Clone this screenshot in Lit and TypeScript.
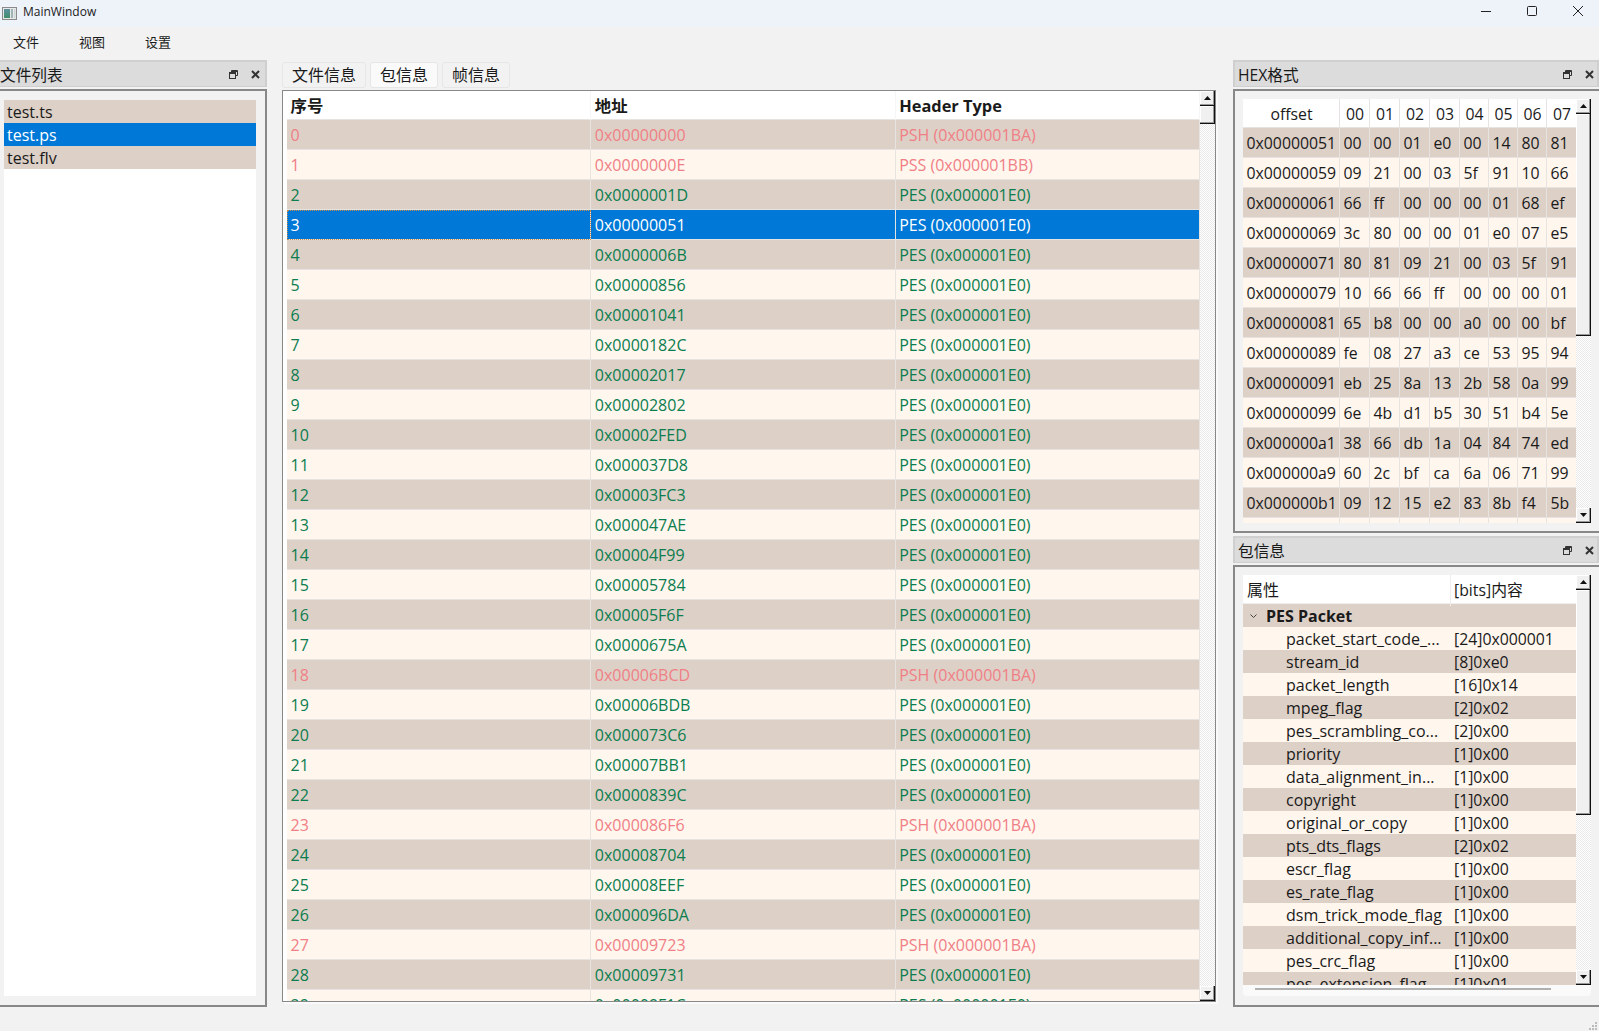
import { LitElement, css, html, svg } from 'lit';
import { customElement } from 'lit/decorators.js';

const PSH = 'PSH (0x000001BA)';
const PSS = 'PSS (0x000001BB)';
const PES = 'PES (0x000001E0)';

const PACKETS: [string, string][] = [
  ['00000000', PSH], ['0000000E', PSS], ['0000001D', PES], ['00000051', PES], ['0000006B', PES],
  ['00000856', PES], ['00001041', PES], ['0000182C', PES], ['00002017', PES], ['00002802', PES],
  ['00002FED', PES], ['000037D8', PES], ['00003FC3', PES], ['000047AE', PES], ['00004F99', PES],
  ['00005784', PES], ['00005F6F', PES], ['0000675A', PES], ['00006BCD', PSH], ['00006BDB', PES],
  ['000073C6', PES], ['00007BB1', PES], ['0000839C', PES], ['000086F6', PSH], ['00008704', PES],
  ['00008EEF', PES], ['000096DA', PES], ['00009723', PSH], ['00009731', PES], ['00009F1C', PES],
];

const HEX_ROWS: [string, string][] = [
  ['00000051', '00 00 01 e0 00 14 80 81'],
  ['00000059', '09 21 00 03 5f 91 10 66'],
  ['00000061', '66 ff 00 00 00 01 68 ef'],
  ['00000069', '3c 80 00 00 01 e0 07 e5'],
  ['00000071', '80 81 09 21 00 03 5f 91'],
  ['00000079', '10 66 66 ff 00 00 00 01'],
  ['00000081', '65 b8 00 00 a0 00 00 bf'],
  ['00000089', 'fe 08 27 a3 ce 53 95 94'],
  ['00000091', 'eb 25 8a 13 2b 58 0a 99'],
  ['00000099', '6e 4b d1 b5 30 51 b4 5e'],
  ['000000a1', '38 66 db 1a 04 84 74 ed'],
  ['000000a9', '60 2c bf ca 6a 06 71 99'],
  ['000000b1', '09 12 15 e2 83 8b f4 5b'],
];

const FIELDS: [string, string][] = [
  ['packet_start_code_...', '[24]0x000001'],
  ['stream_id', '[8]0xe0'],
  ['packet_length', '[16]0x14'],
  ['mpeg_flag', '[2]0x02'],
  ['pes_scrambling_co...', '[2]0x00'],
  ['priority', '[1]0x00'],
  ['data_alignment_in...', '[1]0x00'],
  ['copyright', '[1]0x00'],
  ['original_or_copy', '[1]0x00'],
  ['pts_dts_flags', '[2]0x02'],
  ['escr_flag', '[1]0x00'],
  ['es_rate_flag', '[1]0x00'],
  ['dsm_trick_mode_flag', '[1]0x00'],
  ['additional_copy_inf...', '[1]0x00'],
  ['pes_crc_flag', '[1]0x00'],
  ['pes_extension_flag', '[1]0x01'],
];

const floatIcon = svg`<svg width="9" height="9" viewBox="0 0 9 9" fill="none" stroke="#333" stroke-width="1">
  <path d="M2.5 2.5V.5h6v5h-2"/><rect x=".5" y="2.5" width="6" height="6" fill="#dcdcdc"/><path d="M.5 3.5h6M2.5 1.5h6" />
</svg>`;

const closeIcon = svg`<svg width="9" height="9" viewBox="0 0 9 9" stroke="#333" stroke-width="2">
  <path d="M1 1l7 7M8 1L1 8"/>
</svg>`;

@customElement('app-root')
export class AppRoot extends LitElement {
  static styles = css`
    :host {
      display: flex;
      flex-direction: column;
      height: 100vh;
      overflow: hidden;
      background: #f2f2f2;
      color: #1a1a1a;
      font-family: 'Open Sans', 'Noto Sans CJK SC', sans-serif;
      font-size: 16px;
    }

    .titlebar {
      display: flex;
      align-items: center;
      height: 27px;
      flex: none;
      background: #eef3fa;
      font-size: 12px;
      padding-left: 2px;
    }

    .titlebar .name {
      margin-left: 6px;
      flex: 1;
      position: relative;
      top: -2px;
    }

    .win {
      display: flex;
      gap: 30px;
      padding: 0 13px 5px 0;
    }

    .menubar {
      display: flex;
      gap: 40px;
      height: 33px;
      flex: none;
      align-items: center;
      padding: 0 0 5px 13px;
      box-sizing: border-box;
      font-size: 13px;
    }

    .main {
      display: flex;
      height: 947px;
      flex: none;
    }

    .dock-title {
      display: flex;
      align-items: center;
      height: 27px;
      box-sizing: border-box;
      background: #dcdcdc;
      border: 2px solid #cfcfcf;
      border-left: none;
      border-bottom-width: 1px;
      margin-bottom: 2px;
      gap: 13px;
      padding-right: 5px;
      flex: none;
      font-size: 15.7px;
    }

    .dock-title span {
      flex: 1;
    }

    .dock-title svg {
      display: block;
    }

    .dock-body {
      box-sizing: border-box;
      border: 2px solid #888;
      background: #f2f2f2;
      display: flex;
    }

    .left {
      width: 267px;
      flex: none;
      display: flex;
      flex-direction: column;
    }

    .left .dock-body {
      flex: 1;
      border-left: none;
      padding: 9px 9px 9px 4px;
    }

    .file-list {
      flex: 1;
      background: #fff;
    }

    .file-list div {
      height: 23px;
      line-height: 25px;
      padding-left: 3px;
      background: #ddd0c7;
    }

    .file-list .selected {
      background: #0078d7;
      color: #fff;
    }

    .center {
      width: 934px;
      flex: none;
      margin-left: 15px;
      display: flex;
      flex-direction: column;
    }

    .tabs {
      display: flex;
      gap: 4px;
      height: 26px;
      margin-top: 2px;
      margin-bottom: 2px;
      flex: none;
    }

    .tab {
      box-sizing: border-box;
      height: 26px;
      line-height: 25px;
      padding: 0 9px;
      border: 1px solid #e6e6e6;
      border-radius: 3px;
      background: #f2f2f2;
    }

    .tab.current {
      background: #fafafa;
    }

    .frame {
      height: 912px;
      box-sizing: border-box;
      border: 1px solid #888;
      background: #fff;
      display: flex;
      padding-left: 4px;
      box-shadow: 2px 2px 0 #fafafa;
    }

    .packets {
      flex: 1;
      min-width: 0;
      overflow: hidden;
    }

    .packet-row {
      display: grid;
      grid-template-columns: repeat(3, 1fr);
      height: 30px;
      box-sizing: border-box;
      border-bottom: 1px solid #e6e3e0;
      line-height: 30px;
    }

    .packet-row > div {
      padding-left: 3.5px;
      border-right: 1px solid #e6e3e0;
    }

    .packet-row.head {
      height: 29px;
      font-weight: 700;
      font-size: 16.4px;
      line-height: 29px;
    }

    .packet-row.head > div {
      border-right-color: #f6f6f6;
    }

    .dark {
      background: #ddd0c7;
    }

    .light {
      background: #fff6ee;
    }

    .pes {
      color: #0b7d4e;
    }

    .psx {
      color: #f07f85;
    }

    .packet-row.selected {
      background: #0078d7;
      color: #fff;
    }

    .packet-row.selected > div:first-child {
      outline: 1px dotted #c98a4a;
      outline-offset: -1px;
    }

    .scroll {
      width: 15px;
      flex: none;
      display: flex;
      flex-direction: column;
      background: repeating-conic-gradient(#e9e9e9 0 25%, #fff 0 50%) 0 0 / 2px 2px;
    }

    .scroll .btn {
      height: 15px;
      flex: none;
      box-sizing: border-box;
      display: flex;
      align-items: center;
      justify-content: center;
      background: #f0f0f0;
      border-right: 1px solid #111;
      border-bottom: 1px solid #111;
      box-shadow: inset -1px -1px 0 #999, inset 1px 1px 0 #fff;
    }

    .scroll .thumb {
      flex: none;
      box-sizing: border-box;
      background: #f0f0f0;
      border-right: 1px solid #111;
      border-bottom: 1px solid #111;
      box-shadow: inset -1px -1px 0 #999, inset 1px 1px 0 #fff;
    }

    .scroll .track {
      flex: 1;
    }

    .right {
      width: 366px;
      flex: none;
      margin-left: 17px;
      display: flex;
      flex-direction: column;
    }

    .right .dock-title {
      padding-left: 3px;
      padding-right: 3px;
      border-left: 2px solid #cfcfcf;
    }

    .hex-dock {
      height: 444px;
      padding: 8px 8px 8px 8px;
      border-right: none;
      margin-bottom: 3px;
    }

    .tree-dock {
      flex: 1;
      padding: 8px 8px 9px 8px;
      border-right: none;
    }

    .hex {
      flex: 1;
      min-width: 0;
      overflow: hidden;
      background: #fff6ee;
      font-size: 15.8px;
    }

    .hex-row {
      display: grid;
      grid-template-columns: 97px 30px 30px 30px 30px 29px 29px 29px 30px;
      height: 30px;
      box-sizing: border-box;
      border-bottom: 1px solid #e6e3e0;
      line-height: 30px;
    }

    .hex-row > div {
      padding-left: 3.5px;
      border-right: 1px solid #e6e3e0;
    }

    .hex-row.head {
      height: 29px;
      line-height: 31px;
      background: #fff;
      text-align: center;
    }

    .hex-row.head > div {
      padding-left: 1px;
    }

    .tree-wrap {
      flex: 1;
      min-width: 0;
      display: flex;
      flex-direction: column;
      background: #fafafa;
      border-radius: 0 0 4px 4px;
    }

    .tree-top {
      height: 410px;
      flex: none;
      display: flex;
    }

    .tree {
      flex: 1;
      min-width: 0;
      overflow: hidden;
      background: #fff;
    }

    .tree-row {
      display: grid;
      grid-template-columns: 208px 1fr;
      height: 23px;
      line-height: 24px;
    }

    .tree-row .name {
      padding-left: 43px;
    }

    .tree-row .value {
      padding-left: 3px;
      font-size: 15.8px;
    }

    .tree-row.head {
      height: 29px;
      line-height: 31px;
      border-bottom: 1px solid #eee;
      box-sizing: border-box;
    }

    .tree-row.head .name {
      padding-left: 4px;
      border-right: 1px solid #eee;
    }

    .tree-row.group {
      grid-template-columns: 1fr;
      font-weight: 700;
      line-height: 21px;
    }

    .group .name {
      padding: 2px 0 0 6px;
      display: flex;
      align-items: center;
      gap: 8px;
    }

    .group svg {
      margin-top: -2px;
    }

    .hbar {
      flex: 1;
      padding: 3px 40px 0 12px;
    }

    .hbar div {
      height: 2px;
      background: #b0b0b0;
    }

    .status {
      flex: 1;
      display: flex;
      justify-content: flex-end;
      align-items: flex-end;
      padding: 0 2px 1px 0;
    }

    .status svg {
      display: block;
    }
  `;

  private scrollbar(thumb: number) {
    return html`<div class="scroll">
      <div class="btn">
        <svg width="7" height="4" viewBox="0 0 7 4"><path d="M3.5 0L7 4H0z" fill="#111" /></svg>
      </div>
      <div class="thumb" style="height:${thumb}px"></div>
      <div class="track"></div>
      <div class="btn">
        <svg width="7" height="4" viewBox="0 0 7 4"><path d="M0 0h7L3.5 4z" fill="#111" /></svg>
      </div>
    </div>`;
  }

  private renderTitlebar() {
    return html`<div class="titlebar">
      <svg width="15" height="15" viewBox="0 0 15 15">
        <defs>
          <linearGradient id="app-icon" x1="0" y1="0" x2="0" y2="1">
            <stop offset="0" stop-color="#5d8fa0" />
            <stop offset="1" stop-color="#3f8f6a" />
          </linearGradient>
        </defs>
        <rect x=".5" y="1.5" width="14" height="12" fill="#e8e8e8" stroke="#8a8a8a" />
        <rect x="2" y="3" width="6" height="9" fill="url(#app-icon)" />
        <rect x="9" y="3" width="2" height="9" fill="#9fb4b4" />
        <rect x="12" y="3" width="1.5" height="9" fill="#cfd8d8" />
      </svg>
      <div class="name">MainWindow</div>
      <div class="win">
        <svg width="16" height="12" viewBox="0 0 16 12" stroke="#222" fill="none">
          <path d="M3 6.5h10" />
        </svg>
        <svg width="16" height="12" viewBox="0 0 16 12" stroke="#222" fill="none">
          <rect x="3.5" y="1.5" width="9" height="9" rx="1" />
        </svg>
        <svg width="16" height="12" viewBox="0 0 16 12" stroke="#222" fill="none">
          <path d="M3 1l10 10M13 1L3 11" />
        </svg>
      </div>
    </div>`;
  }

  private renderLeft() {
    return html`<div class="left">
      <div class="dock-title"><span>文件列表</span>${floatIcon}${closeIcon}</div>
      <div class="dock-body">
        <div class="file-list">
          <div>test.ts</div>
          <div class="selected">test.ps</div>
          <div>test.flv</div>
        </div>
      </div>
    </div>`;
  }

  private renderCenter() {
    return html`<div class="center">
      <div class="tabs">
        <div class="tab">文件信息</div>
        <div class="tab current">包信息</div>
        <div class="tab">帧信息</div>
      </div>
      <div class="frame">
        <div class="packets">
          <div class="packet-row head">
            <div>序号</div>
            <div>地址</div>
            <div>Header Type</div>
          </div>
          ${PACKETS.map(([addr, type], i) => {
            const stripe = i % 2 === 0 ? 'dark' : 'light';
            const kind = type === PES ? 'pes' : 'psx';
            const cls = i === 3 ? 'selected' : `${stripe} ${kind}`;
            return html`<div class="packet-row ${cls}">
              <div>${i}</div>
              <div>0x${addr}</div>
              <div>${type}</div>
            </div>`;
          })}
        </div>
        ${this.scrollbar(18)}
      </div>
    </div>`;
  }

  private renderHex() {
    const heads = ['00', '01', '02', '03', '04', '05', '06', '07'];
    return html`<div class="dock-body hex-dock">
      <div class="hex">
        <div class="hex-row head">
          <div>offset</div>
          ${heads.map((h) => html`<div>${h}</div>`)}
        </div>
        ${HEX_ROWS.map(
          ([offset, bytes], i) => html`<div class="hex-row ${i % 2 === 0 ? 'dark' : 'light'}">
            <div>0x${offset}</div>
            ${bytes.split(' ').map((b) => html`<div>${b}</div>`)}
          </div>`,
        )}
        <div class="hex-row light">
          <div></div>
          ${heads.map(() => html`<div></div>`)}
        </div>
      </div>
      ${this.scrollbar(222)}
    </div>`;
  }

  private renderTree() {
    return html`<div class="dock-body tree-dock">
      <div class="tree-wrap">
        <div class="tree-top">
          <div class="tree">
            <div class="tree-row head">
              <div class="name">属性</div>
              <div class="value">[bits]内容</div>
            </div>
            <div class="tree-row group dark">
              <div class="name">
                <svg width="9" height="6" viewBox="0 0 9 6" fill="none" stroke="#444">
                  <path d="M1.5 1.5L4.5 4.5L7.5 1.5" />
                </svg>
                PES Packet
              </div>
            </div>
            ${FIELDS.map(
              ([name, value], i) => html`<div class="tree-row ${i % 2 === 0 ? 'light' : 'dark'}">
                <div class="name">${name}</div>
                <div class="value">${value}</div>
              </div>`,
            )}
          </div>
          ${this.scrollbar(225)}
        </div>
        <div class="hbar"><div></div></div>
      </div>
    </div>`;
  }

  render() {
    return html`
      ${this.renderTitlebar()}
      <div class="menubar"><div>文件</div><div>视图</div><div>设置</div></div>
      <div class="main">
        ${this.renderLeft()} ${this.renderCenter()}
        <div class="right">
          <div class="dock-title"><span>HEX格式</span>${floatIcon}${closeIcon}</div>
          ${this.renderHex()}
          <div class="dock-title"><span>包信息</span>${floatIcon}${closeIcon}</div>
          ${this.renderTree()}
        </div>
      </div>
      <div class="status">
        <svg width="8" height="8" viewBox="0 0 8 8" fill="#bbb">
          <path d="M6 0h2v2H6zM3 3h2v2H3zM6 3h2v2H6zM0 6h2v2H0zM3 6h2v2H3zM6 6h2v2H6z" />
        </svg>
      </div>
    `;
  }
}
